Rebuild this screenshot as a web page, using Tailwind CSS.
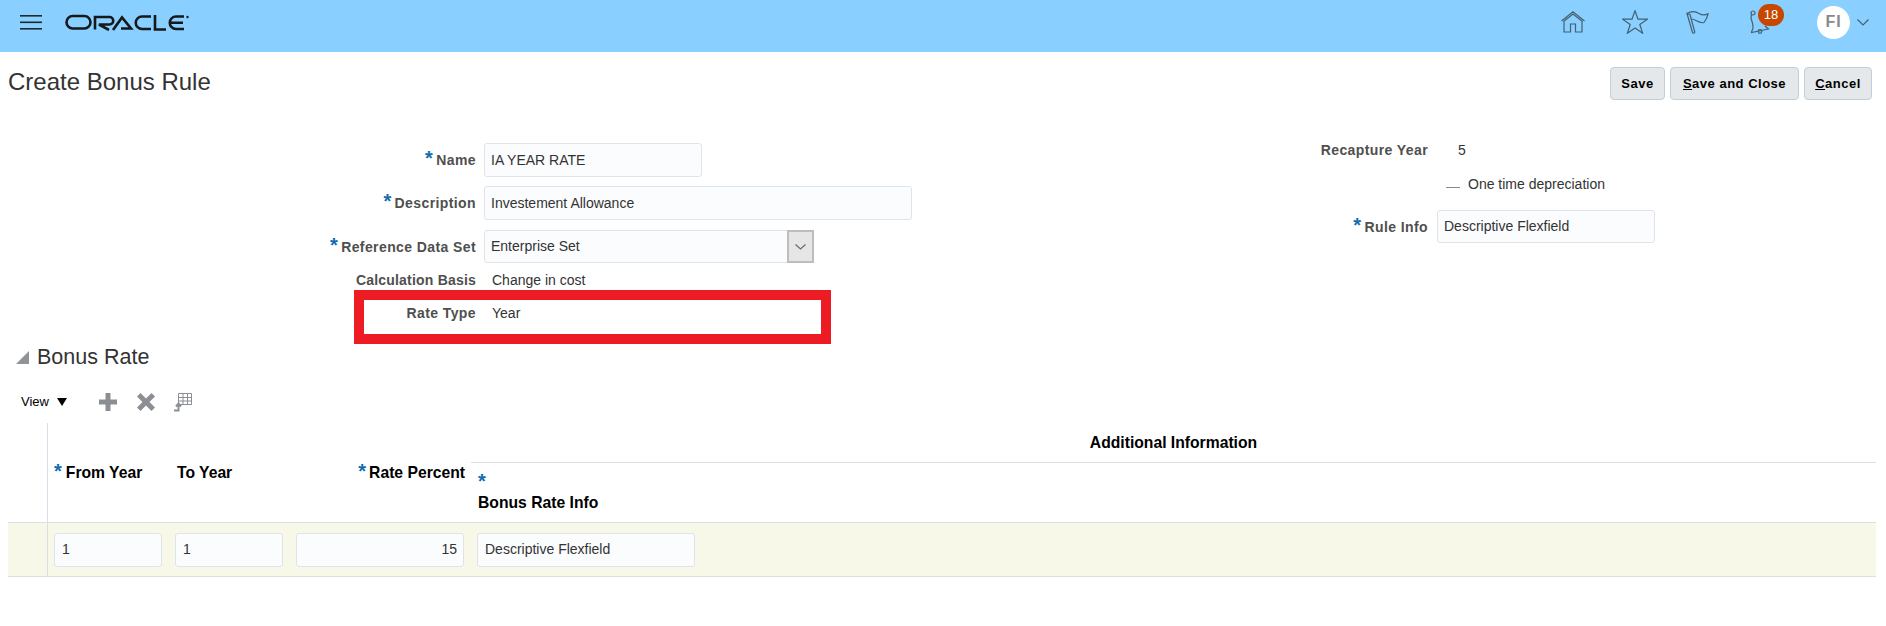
<!DOCTYPE html>
<html lang="en">
<head>
<meta charset="UTF-8" />
<title>Create Bonus Rule</title>
<script src="https://cdn.jsdelivr.net/npm/@tailwindcss/browser@4"></script>
</head>
<body class="bg-white font-['Liberation_Sans',Arial,sans-serif] text-[14px] text-[#333333] overflow-hidden">

<!-- top bar -->
<header class="h-[52px] bg-[#89cfff] flex items-center pl-[20px] pr-[17px] pb-[8px]">
  <svg class="w-[22px] h-[15px] text-[#1f2a30]" viewBox="0 0 22 15" fill="currentColor">
    <rect y="0" width="22" height="1.6"/><rect y="6.5" width="22" height="1.6"/><rect y="13" width="22" height="1.6"/>
  </svg>
  <svg class="w-[125px] h-[17px] ml-[23px]" viewBox="0 0 125 17" fill="none" stroke="#16191b" stroke-width="2.6">
    <rect x="1.5" y="2" width="24" height="12.5" rx="6.2"/>
    <path d="M30 15.500V3h14.500a3.400 3.400 0 0 1 0 7.500H34L44 16"/>
    <path d="M48 16 57 3.500 66 14.500H56"/>
    <path d="M86 2.500H77a6.200 6.200 0 0 0 0 12.500h9"/>
    <path d="M90 1v14.500h11"/>
    <path d="M119 2.500h-8a6.200 6.200 0 0 0 0 12.500h8M105 8.700h13"/>
    <circle cx="122.500" cy="3" r="1.200" fill="#16191b" stroke="none"/>
  </svg>
  <div class="ml-auto flex items-center">
    <svg class="w-[24px] h-[22px]" viewBox="0 0 24 22" fill="none" stroke="#44606f" stroke-width="1.200">
      <path d="M.5 10 12 .8 23.500 10M2.500 10.500 12 3l9.500 7.500M3 10v11h6.500v-8h5v8H21V10"/>
    </svg>
    <svg class="w-[26px] h-[24px] ml-[37px]" viewBox="0 0 26 24" fill="none" stroke="#44606f" stroke-width="1.200">
      <path d="M13 .8 16 9.200H25.500L17.800 14.500 20.600 23.200 13 18 5.400 23.200 8.200 14.500.5 9.200H10Z"/>
    </svg>
    <svg class="w-[23px] h-[24px] ml-[38px]" viewBox="0 0 23 24" fill="none" stroke="#44606f" stroke-width="1.200">
      <path d="M1 3.500C6 .5 10 1.500 13 3.500c3 1.800 6 2 9 .3-.5 3.500-2 6-4 8.700-3 1-5.500-.5-8-2-1.500-1-3-1.500-5-1.500"/>
      <path d="M1 3.500 6.500 22.500c.4 1 2.400.6 2.300-.4L4 4.500 1 3.500Z"/>
    </svg>
    <div class="relative w-[22px] h-[25px] ml-[40px]">
      <svg class="w-[22px] h-[25px]" viewBox="0 0 22 25" fill="none" stroke="#44606f" stroke-width="1.200">
        <circle cx="4" cy="3" r="2"/>
        <path d="M2.500 4.500C1.500 7 2 9 3 11.500c1 3 1.500 6 .5 8-.5 1-1 2-1 3l17-3.500c-1-1-2.500-2-3.500-3"/>
        <circle cx="11" cy="21.500" r="1.800"/>
      </svg>
      <span class="absolute left-[9px] top-[-6px] w-[26px] h-[22px] rounded-full bg-[#c74600] text-white text-[13px] flex items-center justify-center">18</span>
    </div>
    <div class="w-[33px] h-[33px] rounded-full bg-white ml-[46px] flex items-center justify-center font-bold text-[#8a8a8a] text-[16px] tracking-[1px]">FI</div>
    <svg class="w-[12px] h-[7px] ml-[7px]" viewBox="0 0 12 7" fill="none" stroke="#44606f" stroke-width="1.200"><path d="M.5.500 6 6l5.500-5.500"/></svg>
  </div>
</header>

<!-- title row -->
<div class="flex items-start justify-between pl-[8px] pr-[14px] pt-[15px] h-[89px]">
  <h1 class="text-[24px] leading-[30px] text-[#333333]">Create Bonus Rule</h1>
  <div class="flex gap-[5px]">
    <button class="h-[33px] w-[55px] rounded-[4px] border border-[#c4ced7] bg-[#e4e8ea] text-[13px] font-bold text-black tracking-[.5px]">Save</button>
    <button class="h-[33px] w-[129px] rounded-[4px] border border-[#c4ced7] bg-[#e4e8ea] text-[13px] font-bold text-black tracking-[.5px]"><span class="underline">S</span>ave and Close</button>
    <button class="h-[33px] w-[68px] rounded-[4px] border border-[#c4ced7] bg-[#e4e8ea] text-[13px] font-bold text-black tracking-[.5px]"><span class="underline">C</span>ancel</button>
  </div>
</div>

<!-- form -->
<div class="flex h-[204px] items-start">
  <div class="w-[912px] pt-[2px] shrink-0">
    <div class="flex items-center h-[34px]">
      <label class="w-[476px] text-right font-bold text-[#4f4f4f] tracking-[.4px] pb-[1px]"><span class="text-[#0f6cb0] text-[20px] leading-none mr-[3px]">*</span>Name</label>
      <div class="ml-[8px] w-[218px] h-[34px] border border-[#dfe4ea] rounded-[3px] bg-[#fbfcfe] px-[6px] flex items-center">IA YEAR RATE</div>
    </div>
    <div class="flex items-center h-[34px] mt-[9px]">
      <label class="w-[476px] text-right font-bold text-[#4f4f4f] tracking-[.4px] pb-[1px]"><span class="text-[#0f6cb0] text-[20px] leading-none mr-[3px]">*</span>Description</label>
      <div class="ml-[8px] w-[428px] h-[34px] border border-[#dfe4ea] rounded-[3px] bg-[#fbfcfe] px-[6px] flex items-center">Investement Allowance</div>
    </div>
    <div class="flex items-center h-[33px] mt-[10px]">
      <label class="w-[476px] text-right font-bold text-[#4f4f4f] tracking-[.4px] pb-[1px]"><span class="text-[#0f6cb0] text-[20px] leading-none mr-[3px]">*</span>Reference Data Set</label>
      <div class="ml-[8px] w-[330px] h-[33px] border border-[#dfe4ea] rounded-[3px] bg-[#fbfcfe] pl-[6px] flex items-center justify-between">
        Enterprise Set
        <span class="w-[27px] h-[33px] -mr-px border-2 border-[#bdbdbd] bg-[#e6e6e6] flex items-center justify-center">
          <svg class="w-[11px] h-[6px]" viewBox="0 0 11 6" fill="none" stroke="#6a6a6a" stroke-width="1.200"><path d="M.5.500 5.500 5l5-4.500"/></svg>
        </span>
      </div>
    </div>
    <div class="flex items-center h-[18px] mt-[8px]">
      <label class="w-[476px] text-right font-bold text-[#4f4f4f] tracking-[.2px]">Calculation Basis</label>
      <span class="ml-[16px]">Change in cost</span>
    </div>
    <!-- red highlight drawn on the screenshot -->
    <div class="ml-[354px] w-[477px] h-[54px] mt-[1px] border-[10px] border-[#ed1c24] flex items-center pb-[8px]">
      <label class="w-[112px] text-right font-bold text-[#4f4f4f] tracking-[.4px]">Rate Type</label>
      <span class="ml-[16px]">Year</span>
    </div>
  </div>
  <div class="w-[743px] shrink-0">
    <div class="flex items-center h-[18px]">
      <label class="w-[516px] text-right font-bold text-[#4f4f4f] tracking-[.4px]">Recapture Year</label>
      <span class="ml-[30px]">5</span>
    </div>
    <div class="flex items-center h-[18px] mt-[16px] pl-[534px]">
      <span class="w-[14px] h-px bg-[#8a8a8a] mt-[6px]"></span>
      <span class="ml-[8px]">One time depreciation</span>
    </div>
    <div class="flex items-center h-[33px] mt-[17px]">
      <label class="w-[516px] text-right font-bold text-[#4f4f4f] tracking-[.4px]"><span class="text-[#0f6cb0] text-[20px] leading-none mr-[3px]">*</span>Rule Info</label>
      <div class="ml-[9px] w-[218px] h-[33px] border border-[#dfe4ea] rounded-[3px] bg-[#fbfcfe] px-[6px] flex items-center">Descriptive Flexfield</div>
    </div>
  </div>
</div>

<!-- bonus rate section -->
<div class="flex items-center h-[24px] pl-[16px]">
  <svg class="w-[13px] h-[13px]" viewBox="0 0 13 13" fill="#8f9499"><path d="M13 0v13H0Z"/></svg>
  <h2 class="ml-[8px] text-[21.500px] text-[#333333]">Bonus Rate</h2>
</div>

<div class="flex items-center h-[24px] pl-[21px] mt-[21px]">
  <span class="text-black text-[13px]">View</span>
  <span class="ml-[8px] w-0 h-0 border-x-[5px] border-t-[8px] border-x-transparent border-t-black"></span>
  <svg class="ml-[32px] w-[18px] h-[18px]" viewBox="0 0 18 18" fill="#8b8f93"><path d="M6.500 0h5v6.500H18v5h-6.500V18h-5v-6.500H0v-5h6.500Z"/></svg>
  <svg class="ml-[20px] w-[18px] h-[18px]" viewBox="0 0 18 18" fill="#8b8f93"><path d="M3.500 0 9 5.500 14.500 0 18 3.500 12.500 9l5.500 5.500-3.500 3.500L9 12.500 3.500 18 0 14.500 5.500 9 0 3.500Z"/></svg>
  <svg class="ml-[18px] w-[20px] h-[20px]" viewBox="0 0 20 20" fill="none" stroke="#8b8f93"><path d="M5.500 1.500h13v11h-13zM5.500 5.500h13M5.500 9h13M10 1.500v11M14.500 1.500v11"/><path d="M1 18.500h4.500v-6M3 14.500l2.500-3 2.500 3" stroke-width="2"/></svg>
</div>

<!-- table -->
<div class="mx-[8px] mt-[9px] w-[1868px]">
  <div class="flex h-[100px] border-b border-[#d9dfe6] text-[15.700px] leading-[20px] font-bold text-black">
    <div class="w-[40px] border-r border-[#d9dfe6]"></div>
    <div class="w-[122px] pl-[6px] pt-[38px]"><span class="text-[#0f6cb0] text-[20px] leading-none mr-[4px]">*</span>From Year</div>
    <div class="w-[121px] pl-[7px] pt-[40px]">To Year</div>
    <div class="w-[174px] text-right pt-[38px]"><span class="text-[#0f6cb0] text-[20px] leading-none mr-[3px]">*</span>Rate Percent</div>
    <div class="flex-1 ml-[6px]">
      <div class="h-[40px] border-b border-[#d9dfe6] flex items-center justify-center">Additional Information</div>
      <div class="pl-[7px]">
        <div class="text-[#0f6cb0] text-[20px] h-[30px] pt-[8px]">*</div>
        <div class="h-[20px]">Bonus Rate Info</div>
      </div>
    </div>
  </div>
  <div class="flex h-[54px] items-center border-b border-[#d9dfe6] bg-[#f7f8e8]">
    <div class="w-[40px] h-full border-r border-[#d9dfe6]"></div>
    <div class="ml-[6px] w-[108px] h-[34px] border border-[#dfe4ea] rounded-[3px] bg-[#fbfcfe] px-[7px] flex items-center">1</div>
    <div class="ml-[13px] w-[108px] h-[34px] border border-[#dfe4ea] rounded-[3px] bg-[#fbfcfe] px-[7px] flex items-center">1</div>
    <div class="ml-[13px] w-[168px] h-[34px] border border-[#dfe4ea] rounded-[3px] bg-[#fbfcfe] px-[6px] flex items-center justify-end">15</div>
    <div class="ml-[13px] w-[218px] h-[34px] border border-[#dfe4ea] rounded-[3px] bg-[#fbfcfe] px-[7px] flex items-center">Descriptive Flexfield</div>
  </div>
</div>

</body>
</html>
